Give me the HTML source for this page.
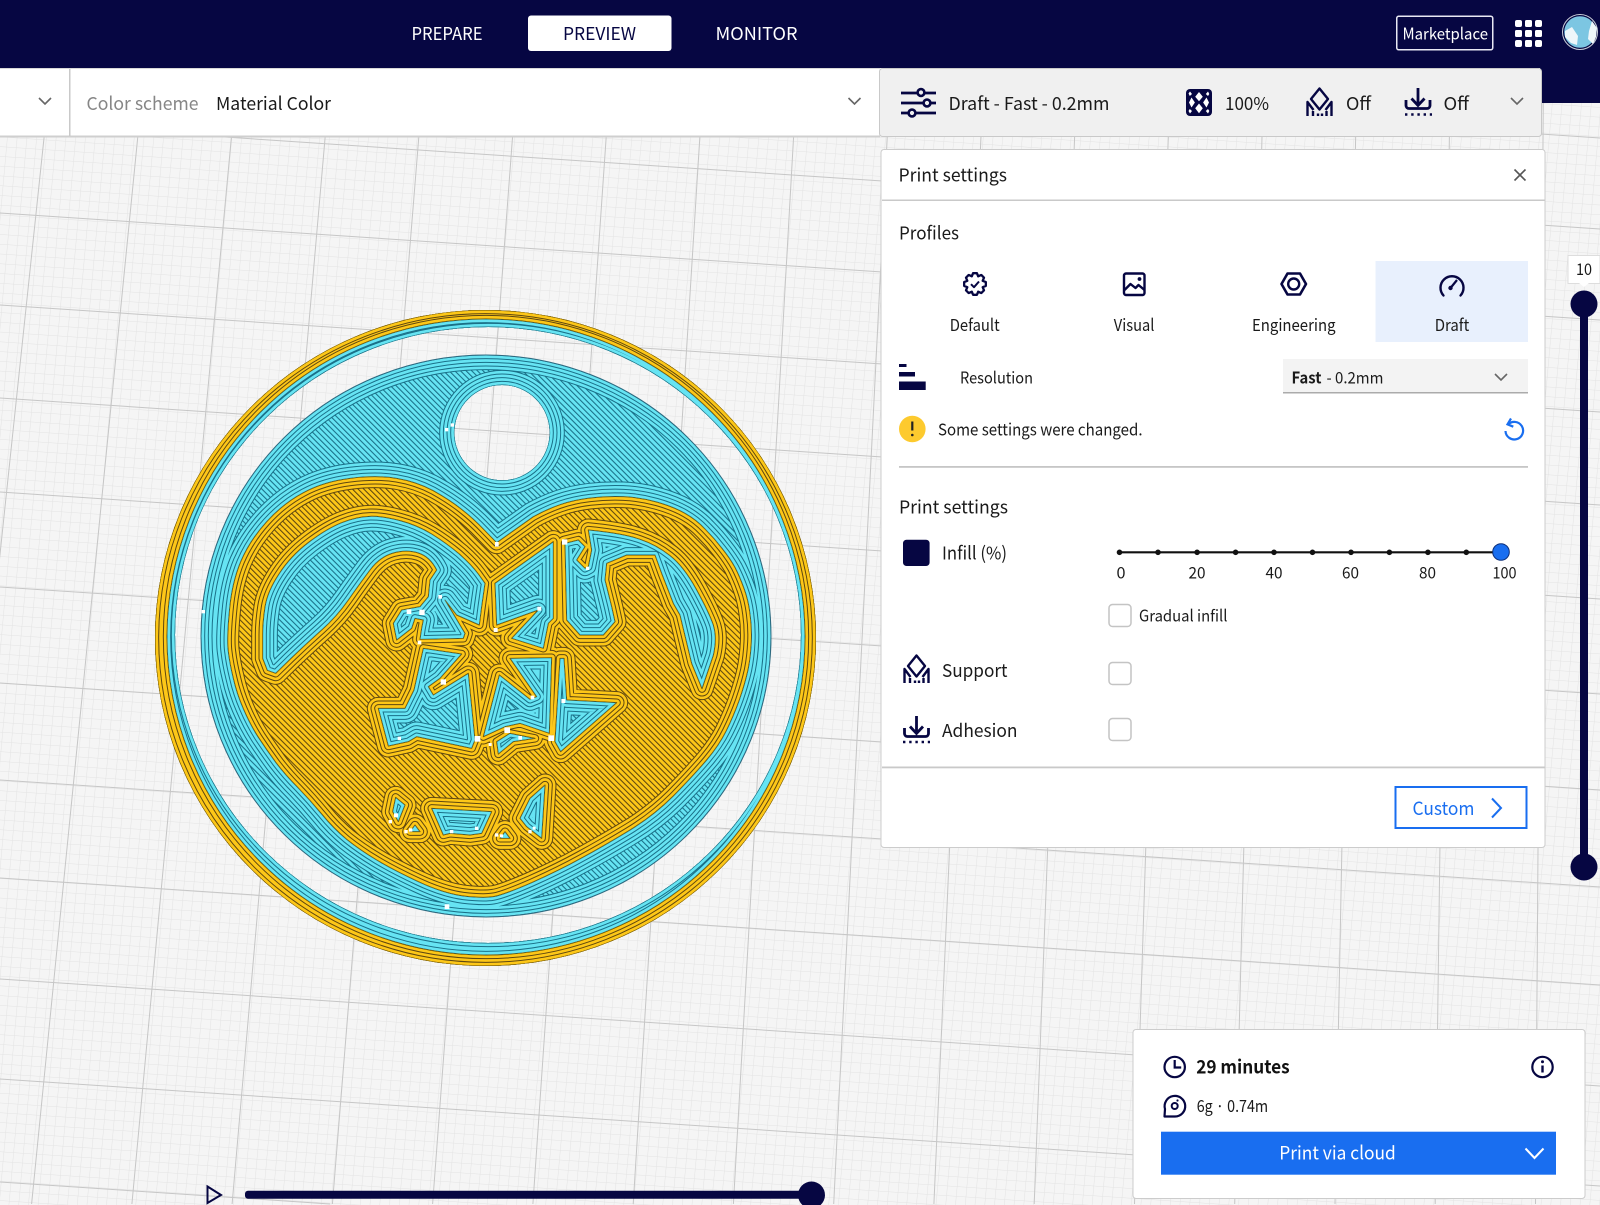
<!DOCTYPE html>
<html lang="en"><head><meta charset="utf-8"><title>Preview</title>
<style>html,body{margin:0;padding:0;width:1600px;height:1205px;overflow:hidden;background:#f4f4f4}svg{display:block;position:absolute;left:0;top:0}text{font-family:"Noto Sans CJK JP","Liberation Sans",sans-serif;fill:#1a1a1a}</style></head>
<body>
<svg xmlns="http://www.w3.org/2000/svg" width="1600" height="1205" viewBox="0 0 1600 1205">
<defs>
<pattern id="mg" patternUnits="userSpaceOnUse" width="9.7" height="9.7" patternTransform="matrix(1,.067,-.09,1,0,0)"><rect width="9.7" height="9.7" fill="#f5f5f5"/><path d="M0 0H9.7M0 0V9.7" stroke="#e3e3e3" stroke-width="1" fill="none"/></pattern>
<pattern id="py" patternUnits="userSpaceOnUse" width="12" height="20" patternTransform="rotate(-45)"><rect width="12" height="20" fill="#fdc718"/><rect width="3.2" height="20" fill="#5f4710"/></pattern>
<pattern id="pc" patternUnits="userSpaceOnUse" width="12" height="20" patternTransform="rotate(-45)"><rect width="12" height="20" fill="#66e4f3"/><rect width="3.2" height="20" fill="#1a7088"/></pattern>
<path id="y" fill-rule="evenodd" clip-rule="evenodd" d="M-555 414a991.5 984 0 1 0 1983 0a991.5 984 0 1 0-1983 0Z M-519 411a957 954 0 1 0 1914 0a957 954 0 1 0-1914 0Z
M470 128L580 50Q620 28 660 14Q700 0 750 -6Q800 -12 850 -10Q900 -8 950 6Q1000 20 1035 40Q1070 60 1096 88Q1123 115 1146 145Q1170 175 1185 202Q1199 229 1212 265Q1225 300 1230 341Q1236 382 1234 426Q1232 470 1224 510Q1215 551 1198 600Q1180 650 1159 692Q1138 735 1100 780Q1061 826 1000 888Q939 949 862 995Q786 1041 723 1075Q660 1110 575 1148Q490 1185 460 1190Q430 1195 370 1188Q310 1180 235 1145Q160 1110 110 1080Q60 1050 20 1018Q-20 985 -55 942Q-90 900 -126 863Q-163 826 -192 788Q-220 750 -245 712Q-270 673 -290 626Q-310 580 -320 535Q-331 490 -335 455Q-340 420 -332 335Q-325 250 -298 185Q-270 120 -220 65Q-170 10 -110 -22Q-50 -55 30 -65Q110 -75 170 -65Q230 -55 280 -28Q330 0 365 28Q400 55 435 92L470 128Z
M-218 511L-232 475Q-232 440 -232 404Q-232 367 -225 321Q-218 275 -183 222Q-148 168 -94 127Q-40 86 5 68Q50 50 90 49Q130 48 180 62Q230 75 275 102Q320 130 358 162Q395 195 415 222L435 250L425 320L418 375L350 345L315 300L375 400L370 415L240 418L245 385L250 360L225 355L215 385L170 420L160 370L185 330L240 320L265 290L270 240L290 210Q270 170 235 159Q200 148 160 159Q120 170 90 210Q60 250 25 300Q-10 350 -55 390Q-100 430 -147 475L-193 520Z
M465 250L640 125L640 355L625 370L610 445L515 415L595 330L470 375Z
M675 130L715 120L735 140L710 180L735 205L745 200L755 150L745 90Q850 100 900 118Q950 135 990 167Q1031 199 1069 268Q1107 337 1120 375Q1132 413 1120 466L1086 566L1055 490L1020 345L1000 310L965 220L945 165L860 165L800 190L795 240L815 320L825 365L790 405L720 405L680 360Z
M250 445L365 462L300 535L265 560L280 585L385 520L405 720L395 745L230 710L205 725L145 738L115 625L195 625L222 570Z
M510 475L635 473L628 700L540 670L495 680L430 710L478 525L570 598L590 590Z
M470 725L510 700L585 715L520 725L475 762Z
M660 475L672 475L680 600L830 608L662 755L645 725Z
M167 892L195 915L175 965L158 935Z M225 975L240 995L210 995Z M275 925L455 935L425 1000L390 1005L330 1000L310 1005Z M495 995L510 1015L480 1015Z M615 855L605 1015L560 980L540 955L570 895Z"/>
<path id="c" fill-rule="evenodd" clip-rule="evenodd" d="M-519 411a957 954 0 1 0 1914 0a957 954 0 1 0-1914 0Z M-495 405a939 924 0 1 0 1878 0a939 924 0 1 0-1878 0Z M-417 408a855 843 0 1 0 1710 0a855 843 0 1 0-1710 0Z M343 -202a143 143 0 1 0 286 0a143 143 0 1 0-286 0Z
M470 128L580 50Q620 28 660 14Q700 0 750 -6Q800 -12 850 -10Q900 -8 950 6Q1000 20 1035 40Q1070 60 1096 88Q1123 115 1146 145Q1170 175 1185 202Q1199 229 1212 265Q1225 300 1230 341Q1236 382 1234 426Q1232 470 1224 510Q1215 551 1198 600Q1180 650 1159 692Q1138 735 1100 780Q1061 826 1000 888Q939 949 862 995Q786 1041 723 1075Q660 1110 575 1148Q490 1185 460 1190Q430 1195 370 1188Q310 1180 235 1145Q160 1110 110 1080Q60 1050 20 1018Q-20 985 -55 942Q-90 900 -126 863Q-163 826 -192 788Q-220 750 -245 712Q-270 673 -290 626Q-310 580 -320 535Q-331 490 -335 455Q-340 420 -332 335Q-325 250 -298 185Q-270 120 -220 65Q-170 10 -110 -22Q-50 -55 30 -65Q110 -75 170 -65Q230 -55 280 -28Q330 0 365 28Q400 55 435 92L470 128Z
M-218 511L-232 475Q-232 440 -232 404Q-232 367 -225 321Q-218 275 -183 222Q-148 168 -94 127Q-40 86 5 68Q50 50 90 49Q130 48 180 62Q230 75 275 102Q320 130 358 162Q395 195 415 222L435 250L425 320L418 375L350 345L315 300L375 400L370 415L240 418L245 385L250 360L225 355L215 385L170 420L160 370L185 330L240 320L265 290L270 240L290 210Q270 170 235 159Q200 148 160 159Q120 170 90 210Q60 250 25 300Q-10 350 -55 390Q-100 430 -147 475L-193 520Z
M465 250L640 125L640 355L625 370L610 445L515 415L595 330L470 375Z
M675 130L715 120L735 140L710 180L735 205L745 200L755 150L745 90Q850 100 900 118Q950 135 990 167Q1031 199 1069 268Q1107 337 1120 375Q1132 413 1120 466L1086 566L1055 490L1020 345L1000 310L965 220L945 165L860 165L800 190L795 240L815 320L825 365L790 405L720 405L680 360Z
M250 445L365 462L300 535L265 560L280 585L385 520L405 720L395 745L230 710L205 725L145 738L115 625L195 625L222 570Z
M510 475L635 473L628 700L540 670L495 680L430 710L478 525L570 598L590 590Z
M470 725L510 700L585 715L520 725L475 762Z
M660 475L672 475L680 600L830 608L662 755L645 725Z
M167 892L195 915L175 965L158 935Z M225 975L240 995L210 995Z M275 925L455 935L425 1000L390 1005L330 1000L310 1005Z M495 995L510 1015L480 1015Z M615 855L605 1015L560 980L540 955L570 895Z"/>
<clipPath id="cy"><use href="#y"/></clipPath>
<clipPath id="cc"><use href="#c"/></clipPath>
</defs>

<!-- build plate -->
<rect width="1600" height="1205" fill="url(#mg)"/>
<g stroke="#c6c6c6" stroke-width="1" fill="none">
<path d="M58.6 0L-68.7 1204M151.4 0L31.6 1204M244.2 0L131.9 1204M337.1 0L232.1 1204M429.9 0L332.4 1204M522.8 0L432.6 1204M615.6 0L532.9 1204M708.4 0L633.2 1204M801.3 0L733.4 1204M894.1 0L833.7 1204M987 0L933.9 1204M1079.8 0L1034.2 1204M1172.6 0L1134.5 1204M1265.5 0L1234.7 1204M1358.3 0L1335 1204M1451.2 0L1435.2 1204M1544 0L1535.5 1204"/>
<path d="M0 31L1600 138M0 122L1600 229M0 213L1600 320M0 305L1600 412M0 398L1600 505M0 492L1600 599M0 587L1600 694M0 683L1600 790M0 780L1600 887M0 878L1600 985M0 979L1600 1086M0 1079L1600 1186M0 1182L330 1204"/>
</g>

<!-- model -->
<g transform="translate(340 500) scale(.33333)">
<g clip-path="url(#cc)" fill="none" stroke-linejoin="round">
<use href="#c" fill="url(#pc)"/>
<use href="#c" stroke="#1a7088" stroke-width="91"/><use href="#c" stroke="#66e4f3" stroke-width="85"/>
<use href="#c" stroke="#1a7088" stroke-width="69"/><use href="#c" stroke="#66e4f3" stroke-width="63"/>
<use href="#c" stroke="#1a7088" stroke-width="47"/><use href="#c" stroke="#66e4f3" stroke-width="41"/>
<use href="#c" stroke="#1a7088" stroke-width="25"/><use href="#c" stroke="#66e4f3" stroke-width="19"/>
<use href="#c" stroke="#1a6478" stroke-width="3"/>
</g>
<g clip-path="url(#cy)" fill="none" stroke-linejoin="round">
<use href="#y" fill="url(#py)"/>
<use href="#y" stroke="#5f4710" stroke-width="69"/><use href="#y" stroke="#fdc718" stroke-width="63"/>
<use href="#y" stroke="#5f4710" stroke-width="47"/><use href="#y" stroke="#fdc718" stroke-width="41"/>
<use href="#y" stroke="#5f4710" stroke-width="25"/><use href="#y" stroke="#fdc718" stroke-width="19"/>
<use href="#y" stroke="#5d4806" stroke-width="3"/>
</g>
<path d="M-417 408a855 843 0 1 0 1710 0a855 843 0 1 0-1710 0Z" fill="none" stroke="#2d6a80" stroke-width="3"/>
<g fill="#fff">
<rect x="465" y="126" width="11" height="14"/><rect x="666" y="118" width="16" height="16"/><rect x="738" y="200" width="10" height="10"/><rect x="295" y="285" width="11" height="11"/><rect x="200" y="328" width="14" height="14"/><rect x="238" y="329" width="16" height="16"/><rect x="233" y="422" width="11" height="11"/><rect x="302" y="538" width="16" height="16"/><rect x="592" y="320" width="12" height="12"/><rect x="461" y="384" width="12" height="12"/><rect x="572" y="587" width="11" height="11"/><rect x="664" y="597" width="12" height="12"/><rect x="493" y="682" width="17" height="17"/><rect x="404" y="708" width="17" height="17"/><rect x="625" y="706" width="17" height="17"/><rect x="535" y="708" width="11" height="11"/><rect x="173" y="710" width="10" height="10"/><rect x="446" y="729" width="9" height="9"/>
<rect x="314" y="1213" width="14" height="14"/><rect x="315" y="-216" width="10" height="10"/><rect x="332" y="-230" width="10" height="10"/><rect x="-415" y="330" width="10" height="10"/>
<rect x="162" y="940" width="12" height="12"/><rect x="146" y="960" width="10" height="10"/><rect x="193" y="990" width="10" height="10"/><rect x="207" y="985" width="10" height="10"/><rect x="330" y="990" width="10" height="10"/><rect x="405" y="980" width="10" height="10"/><rect x="465" y="1000" width="10" height="10"/><rect x="480" y="1003" width="9" height="9"/><rect x="565" y="990" width="10" height="10"/><rect x="578" y="980" width="9" height="9"/>
</g>
</g>

<!-- top bar -->
<rect width="1600" height="68" fill="#060642"/>
<rect x="1540" y="68" width="60" height="35" fill="#060642"/>
<rect x="528" y="15.500" width="143.500" height="35.500" rx="3" fill="#fff"/>
<text x="411.500" y="40" font-size="18" textLength="71" lengthAdjust="spacingAndGlyphs" style="fill:#fff">PREPARE</text>
<text x="563" y="40" font-size="18" textLength="73" lengthAdjust="spacingAndGlyphs" style="fill:#060642">PREVIEW</text>
<text x="715.500" y="40" font-size="18" textLength="82" lengthAdjust="spacingAndGlyphs" style="fill:#fff">MONITOR</text>
<rect x="1396.750" y="16.250" width="96" height="33.500" rx="2" fill="none" stroke="#e8e8f4" stroke-width="1.500"/>
<text x="1402.500" y="39.500" font-size="16" textLength="85.500" lengthAdjust="spacingAndGlyphs" style="fill:#fff">Marketplace</text>
<g fill="#fff"><rect x="1515" y="20" width="7" height="7" rx="2"/><rect x="1525" y="20" width="7" height="7" rx="1.500"/><rect x="1535" y="20" width="7" height="7" rx="2"/><rect x="1515" y="30" width="7" height="7" rx="1.500"/><rect x="1525" y="30" width="7" height="7" rx="1.500"/><rect x="1535" y="30" width="7" height="7" rx="1.500"/><rect x="1515" y="40" width="7" height="7" rx="2"/><rect x="1525" y="40" width="7" height="7" rx="1.500"/><rect x="1535" y="40" width="7" height="7" rx="2"/></g>
<circle cx="1580" cy="32" r="17.500" fill="#060642" stroke="#c9ced8" stroke-width="1"/>
<circle cx="1580" cy="32" r="15.800" fill="#7cc6e2"/>
<path d="M1565 31l7-4 6 9-1 9-6-2-6-6ZM1592 21l-3 10-1 8 5 5 3-7 1-9Z" fill="#eef6fa"/>

<!-- left toolbar -->
<rect x="0" y="68" width="880" height="69" fill="#fff"/>
<rect x="0" y="135.500" width="880" height="2" fill="#cfcfcf"/>
<rect x="0" y="68" width="880" height="1" fill="#d8d8d8"/>
<rect x="69" y="69" width="1.500" height="67" fill="#c9c9c9"/>
<path d="M39 98l6 6 6-6M848.500 98l6 6 6-6" fill="none" stroke="#666" stroke-width="1.600"/>
<text x="86.500" y="110" font-size="18" textLength="112" lengthAdjust="spacingAndGlyphs" style="fill:#868686">Color scheme</text>
<text x="216" y="110" font-size="18" textLength="115" lengthAdjust="spacingAndGlyphs">Material Color</text>

<!-- right toolbar -->
<rect x="879.500" y="68.500" width="662" height="68" rx="3" fill="#f0f0f0" stroke="#c9c9c9"/>
<g stroke="#060642" stroke-width="2.800" fill="none">
<path d="M901 93H936M901 103H936M901 113H936"/>
<g fill="#f0f0f0" stroke-width="2.600"><circle cx="921" cy="92.500" r="3.400"/><circle cx="927" cy="103" r="3.400"/><circle cx="912" cy="113" r="3.400"/></g>
</g>
<text x="948.500" y="110" font-size="18" textLength="161" lengthAdjust="spacingAndGlyphs">Draft - Fast - 0.2mm</text>
<rect x="1186" y="89" width="26" height="27" rx="4" fill="#060642"/>
<path d="M1199 92l3.800 4.800-3.800 4.500-3.800-4.500ZM1199 103.500l3.800 4.800-3.800 5-3.800-5ZM1191.500 97.500l3.400 5-3.400 5-2.500-5ZM1206.500 97.500l2.500 5-2.500 5-3.400-5ZM1190 91.500l2 2.500-2.200 2-1.300-2.500ZM1208 91.500l1.300 2.500-1.300 2-2.200-2ZM1190 113.500l-1.500-2.500 1.300-2 2.200 2ZM1208 113.500l-2.200-2.500 2.200-2 1.300 2Z" fill="#fff"/>
<text x="1225" y="110" font-size="18" textLength="44" lengthAdjust="spacingAndGlyphs">100%</text>
<g fill="none" stroke="#060642" stroke-width="2.400" stroke-linejoin="round"><path d="M1319.500 88.500l8.500 10.500-8.500 10.500-8.500-10.500Z"/><path d="M1307.500 116V102l6 8M1331.500 116V102l-6 8M1313 116v-5M1318 116v-2.500M1322 116v-2.500M1326.500 116v-5"/></g>
<text x="1346" y="110" font-size="18" textLength="25" lengthAdjust="spacingAndGlyphs">Off</text>
<g fill="none" stroke="#060642" stroke-width="2.800"><path d="M1418 88v17M1411.500 98.500l6.500 7 6.500-7M1406 100v5.500a3 3 0 0 0 3 3h18a3 3 0 0 0 3-3V100"/></g>
<path d="M1405 114.500h27" stroke="#060642" stroke-width="2.400" stroke-dasharray="2.400 3.800" fill="none"/>
<text x="1443.500" y="110" font-size="18" textLength="25.500" lengthAdjust="spacingAndGlyphs">Off</text>
<path d="M1511 98l6 6 6-6" fill="none" stroke="#666" stroke-width="1.600"/>

<!-- print settings panel -->
<rect x="881" y="149.500" width="664" height="698" rx="3" fill="#fff" stroke="#cccccc"/>
<rect x="882" y="199.500" width="662.500" height="1.500" fill="#c9c9c9"/>
<text x="898.500" y="181.500" font-size="18" textLength="108.500" lengthAdjust="spacingAndGlyphs">Print settings</text>
<path d="M1514.500 169.500l11 11M1525.500 169.500l-11 11" stroke="#555" stroke-width="1.600" fill="none"/>
<text x="899" y="239.500" font-size="18" textLength="60" lengthAdjust="spacingAndGlyphs">Profiles</text>

<rect x="1375.500" y="261" width="152.500" height="81" fill="#e8f0fd"/>
<!-- gear with check -->
<g transform="translate(975 284)" fill="none" stroke="#060642" stroke-width="2.300" stroke-linejoin="round"><path d="M10.830-1.910L10.830 1.910L7.670 3.180L9.010 6.310L6.310 9.010L3.180 7.670L1.910 10.830L-1.910 10.830L-3.180 7.670L-6.310 9.010L-9.010 6.310L-7.670 3.180L-10.830 1.910L-10.830-1.910L-7.670-3.180L-9.010-6.310L-6.310-9.010L-3.180-7.670L-1.910-10.830L1.910-10.830L3.180-7.670L6.310-9.010L9.010-6.310L7.670-3.180Z"/><path d="M-4 .2L-1 3.200L4-2.500" stroke-width="2"/></g>
<!-- image -->
<g fill="none" stroke="#060642" stroke-width="2.400" stroke-linejoin="round"><rect x="1124" y="273.500" width="20.500" height="21.500" rx="2"/><path d="M1124.500 290l6-6 5 4 3-3 6 5"/></g><circle cx="1139.500" cy="279" r="1.900" fill="#060642"/>
<!-- nut -->
<path d="M1287.500 273.500h12.500l6 10.500-6 10.500h-12.500l-6-10.500Z" fill="none" stroke="#060642" stroke-width="2.600" stroke-linejoin="round"/><circle cx="1293.700" cy="284" r="5.500" fill="none" stroke="#060642" stroke-width="2.400"/>
<!-- gauge -->
<path d="M1443.500 295.500a11.500 11.500 0 1 1 17 0" fill="none" stroke="#060642" stroke-width="2.400" stroke-linecap="round"/><path d="M1450.500 288l6.500-8" stroke="#060642" stroke-width="2.200" fill="none"/><circle cx="1450.500" cy="288" r="2.200" fill="#060642"/>

<text x="949.700" y="331" font-size="16.500" textLength="50" lengthAdjust="spacingAndGlyphs">Default</text>
<text x="1113.800" y="331" font-size="16.500" textLength="40.600" lengthAdjust="spacingAndGlyphs">Visual</text>
<text x="1252" y="331" font-size="16.500" textLength="83.500" lengthAdjust="spacingAndGlyphs">Engineering</text>
<text x="1434.700" y="331" font-size="16.500" textLength="34.600" lengthAdjust="spacingAndGlyphs">Draft</text>

<g fill="#060642"><rect x="899" y="364" width="7.500" height="3"/><rect x="899" y="372" width="16" height="4.500"/><rect x="899" y="381.500" width="26.700" height="8.500"/></g>
<text x="960" y="383.500" font-size="16" textLength="73" lengthAdjust="spacingAndGlyphs">Resolution</text>
<rect x="1283" y="359" width="245" height="34" fill="#f3f3f3"/><rect x="1283" y="392" width="245" height="1.500" fill="#ababab"/>
<text x="1291.500" y="383.500" font-size="16" font-weight="700" textLength="30" lengthAdjust="spacingAndGlyphs">Fast</text>
<text x="1326.500" y="383.500" font-size="16" textLength="57" lengthAdjust="spacingAndGlyphs">- 0.2mm</text>
<path d="M1495 374l6 6 6-6" fill="none" stroke="#666" stroke-width="1.600"/>

<circle cx="912.300" cy="429" r="13.300" fill="#fdca2e"/><path d="M912.300 421.500v9" stroke="#222" stroke-width="2.200" fill="none"/><circle cx="912.300" cy="435" r="1.300" fill="#222"/>
<text x="938" y="435.500" font-size="16.500" textLength="204.500" lengthAdjust="spacingAndGlyphs">Some settings were changed.</text>
<path d="M1508 424.500a8.800 8.800 0 1 1-2.500 6.500" fill="none" stroke="#196ef0" stroke-width="2.200"/><path d="M1511 418.500l-3.500 5.800 5.800 2.400" fill="none" stroke="#196ef0" stroke-width="2.200"/>
<rect x="899" y="466" width="629" height="1.800" fill="#c6c6c6"/>

<text x="899" y="513.500" font-size="18" textLength="109" lengthAdjust="spacingAndGlyphs">Print settings</text>
<rect x="903" y="539.700" width="26.600" height="26.300" rx="3.500" fill="#060642"/>
<text x="942" y="559.500" font-size="18" textLength="65" lengthAdjust="spacingAndGlyphs">Infill (%)</text>
<path d="M1119 552.300H1500" stroke="#111" stroke-width="2.200" fill="none"/>
<g fill="#111"><circle cx="1119.500" cy="552.300" r="2.800"/><circle cx="1158" cy="552.300" r="2.800"/><circle cx="1197.100" cy="552.300" r="2.800"/><circle cx="1235.600" cy="552.300" r="2.800"/><circle cx="1274" cy="552.300" r="2.800"/><circle cx="1312.500" cy="552.300" r="2.800"/><circle cx="1351" cy="552.300" r="2.800"/><circle cx="1389.400" cy="552.300" r="2.800"/><circle cx="1427.900" cy="552.300" r="2.800"/><circle cx="1466.300" cy="552.300" r="2.800"/></g>
<circle cx="1501" cy="552" r="8.300" fill="#196ef0" stroke="#0c2f7a" stroke-width="1"/>
<g font-size="16"><text x="1116.500" y="578.500" textLength="9" lengthAdjust="spacingAndGlyphs">0</text><text x="1188.500" y="578.500" textLength="17" lengthAdjust="spacingAndGlyphs">20</text><text x="1265.500" y="578.500" textLength="17" lengthAdjust="spacingAndGlyphs">40</text><text x="1342" y="578.500" textLength="17" lengthAdjust="spacingAndGlyphs">60</text><text x="1419" y="578.500" textLength="17" lengthAdjust="spacingAndGlyphs">80</text><text x="1492.500" y="578.500" textLength="24" lengthAdjust="spacingAndGlyphs">100</text></g>
<g fill="#fff" stroke="#c4c4c4" stroke-width="1.500"><rect x="1109" y="604.500" width="22" height="22" rx="3.500"/><rect x="1109" y="662.500" width="22" height="22" rx="3.500"/><rect x="1109" y="718.500" width="22" height="22" rx="3.500"/></g>
<text x="1139" y="621.500" font-size="16" textLength="88.500" lengthAdjust="spacingAndGlyphs">Gradual infill</text>
<g fill="none" stroke="#060642" stroke-width="2.400" stroke-linejoin="round"><path d="M916.500 655.500l8.500 10.500-8.500 10.500-8.500-10.500Z"/><path d="M904.500 683V669l6 8M928.500 683V669l-6 8M910 683v-5M915 683v-2.500M919 683v-2.500M923.500 683v-5"/></g>
<text x="942" y="677" font-size="18" textLength="65.500" lengthAdjust="spacingAndGlyphs">Support</text>
<g fill="none" stroke="#060642" stroke-width="2.800"><path d="M916.500 716v17M910 726.500l6.500 7 6.500-7M904.500 728v5.500a3 3 0 0 0 3 3h18a3 3 0 0 0 3-3V728"/></g>
<path d="M903 742h27" stroke="#060642" stroke-width="2.400" stroke-dasharray="2.400 3.800" fill="none"/>
<text x="942" y="737" font-size="18" textLength="75.500" lengthAdjust="spacingAndGlyphs">Adhesion</text>
<rect x="882" y="766.500" width="662.500" height="1.800" fill="#c9c9c9"/>
<rect x="1395.500" y="787" width="131" height="41" fill="#fff" stroke="#196ef0" stroke-width="2"/>
<text x="1412.500" y="815" font-size="18.500" textLength="62" lengthAdjust="spacingAndGlyphs" style="fill:#196ef0">Custom</text>
<path d="M1492 798.500l9 9.500-9 9.500" fill="none" stroke="#196ef0" stroke-width="2"/>

<!-- vertical layer slider -->
<rect x="1568" y="255.500" width="32" height="28" fill="#fff" stroke="#ddd"/><path d="M1579 283l5 4 5-4Z" fill="#fff"/>
<text x="1576" y="275" font-size="16" textLength="16" lengthAdjust="spacingAndGlyphs">10</text>
<rect x="1580" y="303" width="8" height="564" fill="#060642"/>
<circle cx="1584" cy="304" r="13.500" fill="#060642"/><circle cx="1584" cy="867" r="13.500" fill="#060642"/>

<!-- job panel -->
<rect x="1133" y="1029.500" width="452" height="169" rx="3" fill="#fff" stroke="#cccccc"/>
<circle cx="1174.700" cy="1067" r="10.200" fill="none" stroke="#060642" stroke-width="2.200"/><path d="M1174.700 1060v7.500h6.500" fill="none" stroke="#060642" stroke-width="2.200"/>
<text x="1196.200" y="1073.500" font-size="18.500" font-weight="700" textLength="93.500" lengthAdjust="spacingAndGlyphs" style="fill:#111">29 minutes</text>
<circle cx="1542.500" cy="1067" r="10.200" fill="none" stroke="#060642" stroke-width="2.200"/><path d="M1542.500 1065.500v7" stroke="#060642" stroke-width="2.400" fill="none"/><circle cx="1542.500" cy="1061.800" r="1.500" fill="#060642"/>
<path d="M1164.500 1116.500H1175a10.300 10.300 0 1 0-10-7.500l-.5 7.500Z" fill="none" stroke="#060642" stroke-width="2.200" stroke-linejoin="round"/><circle cx="1174.700" cy="1106" r="3" fill="none" stroke="#060642" stroke-width="2"/><circle cx="1177.500" cy="1100.500" r="1.100" fill="#060642"/>
<text x="1196.700" y="1112" font-size="16.500" textLength="71.500" lengthAdjust="spacingAndGlyphs">6g · 0.74m</text>
<rect x="1161" y="1131.700" width="395" height="43" fill="#196ef0"/>
<text x="1279.300" y="1159.500" font-size="18.500" textLength="116.500" lengthAdjust="spacingAndGlyphs" style="fill:#fff">Print via cloud</text>
<path d="M1525.500 1148.500l9 9.500 9-9.500" fill="none" stroke="#fff" stroke-width="2"/>

<!-- timeline -->
<path d="M207.500 1186.500l13.500 8.500-13.500 8Z" fill="none" stroke="#060642" stroke-width="2"/>
<rect x="245" y="1190.700" width="565" height="8" rx="3" fill="#060642"/>
<path d="M802.400 1205A13.500 13.500 0 1 1 820.600 1205Z" fill="#060642"/>
</svg>
</body></html>
